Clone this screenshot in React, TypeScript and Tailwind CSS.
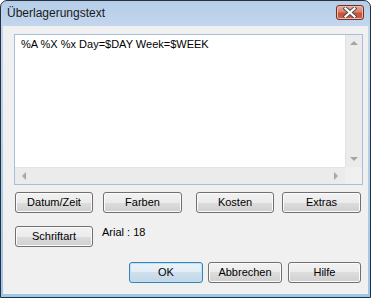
const font = "font-['Liberation_Sans',Arial,sans-serif]";

function Button({
  label,
  className,
  isDefault,
}: {
  label: string;
  className: string;
  isDefault?: boolean;
}) {
  return (
    <div
      className={
        "flex h-[21px] items-center justify-center rounded-[3px] border text-[11px] text-black " +
        (isDefault
          ? "border-[#3c7fb1] bg-[linear-gradient(to_bottom,#eaf3fa_0%,#e2ecf5_50%,#cfdfec_50%,#c2d6e7_100%)] shadow-[inset_0_0_0_1px_#b9e4f8] "
          : "border-[#707070] bg-[linear-gradient(to_bottom,#f2f2f2_0%,#ebebeb_50%,#dddddd_50%,#cfcfcf_100%)] shadow-[inset_0_0_0_1px_#fbfbfb] ") +
        className
      }
    >
      {label}
    </div>
  );
}

function Arrow({ dir }: { dir: "up" | "down" | "left" | "right" }) {
  const points = {
    up: "0,4 4,0 8,4",
    down: "0,0 8,0 4,4",
    left: "4,0 4,8 0,4",
    right: "0,0 0,8 4,4",
  }[dir];
  const vertical = dir === "up" || dir === "down";
  return (
    <svg
      width={vertical ? 8 : 4}
      height={vertical ? 4 : 8}
      viewBox={vertical ? "0 0 8 4" : "0 0 4 8"}
    >
      <polygon points={points} fill="#a5a5a5" />
    </svg>
  );
}

export default function App() {
  return (
    <div className={"h-[298px] w-[371px] bg-white " + font}>
      <div className="flex h-[298px] w-[371px] flex-col rounded-t-[7px] border border-[#27313d] bg-[linear-gradient(to_bottom,#b5cde8,#c3d7ee_26px,#9cc6ea)]">
        {/* title bar */}
        <div className="flex h-[25px] shrink-0 items-start justify-between pl-[6px]">
          <span className="mt-[5px] text-[12px] leading-[14px] text-[#1a1a1a]">
            Überlagerungstext
          </span>
          <div className="mr-[6px] mt-[4px] flex h-[15px] w-[28px] items-center justify-center rounded-[3px] border border-[#7a2a1e] bg-[linear-gradient(to_bottom,#e9a99c_0%,#d88170_45%,#c4533c_55%,#c8624c_100%)] shadow-[inset_0_0_0_1px_#eebcaf]">
            <svg width="14" height="11" viewBox="0 0 14 11">
              <path
                d="M2.5 1.5 L11.5 9.5 M11.5 1.5 L2.5 9.5"
                stroke="#4a4a4a"
                strokeWidth="4"
                strokeLinecap="square"
              />
              <path
                d="M2.5 1.5 L11.5 9.5 M11.5 1.5 L2.5 9.5"
                stroke="#ffffff"
                strokeWidth="2.2"
                strokeLinecap="square"
              />
            </svg>
          </div>
        </div>

        {/* client area */}
        <div className="mx-[2px] mb-[3px] flex flex-1 flex-col bg-[#f0f0f0] pl-[11px] pt-[8px]">
          {/* edit box */}
          <div className="flex h-[151px] w-[349px] flex-col border border-[#a6bfdc] bg-white">
            <div className="flex h-[132px]">
              <div className="flex-1 pl-[6px] pt-[3px] text-[11px] leading-[13px] text-black">
                %A %X %x Day=$DAY Week=$WEEK
              </div>
              <div className="flex w-[17px] flex-col items-center justify-between bg-[#ebebeb] py-[6px] shadow-[inset_1px_0_0_#e3e3e3]">
                <Arrow dir="up" />
                <Arrow dir="down" />
              </div>
            </div>
            <div className="flex h-[17px]">
              <div className="flex flex-1 items-center justify-between bg-[#ebebeb] px-[7px] shadow-[inset_0_1px_0_#e3e3e3]">
                <Arrow dir="left" />
                <Arrow dir="right" />
              </div>
              <div className="w-[17px] bg-[#f0f0f0]" />
            </div>
          </div>

          {/* row 1 */}
          <div className="mt-[7px] flex pl-[1px]">
            <Button label="Datum/Zeit" className="w-[78px]" />
            <Button label="Farben" className="ml-[10px] w-[79px]" />
            <Button label="Kosten" className="ml-[14px] w-[78px]" />
            <Button label="Extras" className="ml-[8px] w-[79px]" />
          </div>

          {/* row 2 */}
          <div className="mt-[13px] flex items-start pl-[1px]">
            <Button label="Schriftart" className="w-[78px]" />
            <span className="ml-[9px] text-[11px] leading-[13px] text-black">
              Arial : 18
            </span>
          </div>

          {/* row 3 */}
          <div className="mt-[15px] flex pl-[115px]">
            <Button label="OK" className="w-[74px]" isDefault />
            <Button label="Abbrechen" className="ml-[5px] w-[74px]" />
            <Button label="Hilfe" className="ml-[6px] w-[73px]" />
          </div>
        </div>
      </div>
    </div>
  );
}
